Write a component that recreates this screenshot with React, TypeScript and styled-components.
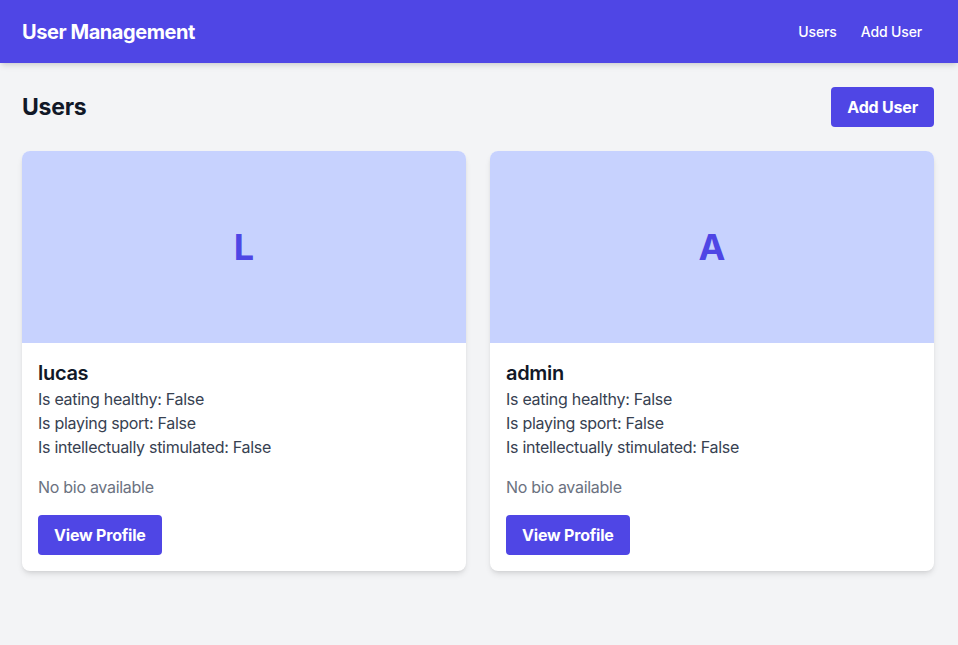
import React from "react";
import styled, { createGlobalStyle } from "styled-components";

const Global = createGlobalStyle`
  html, body { margin: 0; padding: 0; }
  body {
    background: #f3f4f6;
    font-family: Inter, "Noto Sans", "Liberation Sans", sans-serif;
    -webkit-font-smoothing: antialiased;
  }
  * { box-sizing: border-box; }
`;

const Page = styled.div`
  min-height: 645px;
  background: #f3f4f6;
`;

const Nav = styled.nav`
  height: 63px;
  background: #4f46e5;
  box-shadow: 0 4px 6px -1px rgba(0,0,0,0.1), 0 2px 4px -2px rgba(0,0,0,0.1);
  display: flex;
  align-items: center;
  justify-content: space-between;
  padding: 0 24px 0 22px;
`;

const Brand = styled.div`
  color: #fff;
  font-size: 20px;
  font-weight: 700;
  line-height: 28px;
  letter-spacing: -0.022em;
`;

const NavLinks = styled.div`
  display: flex;
`;

const NavLink = styled.a`
  color: #fff;
  font-size: 14px;
  font-weight: 500;
  line-height: 20px;
  padding: 8px 12px;
  text-decoration: none;
  letter-spacing: -0.01em;
`;

const Main = styled.main`
  padding: 24px 24px 0 22px;
`;

const HeaderRow = styled.div`
  display: flex;
  align-items: center;
  justify-content: space-between;
  margin-bottom: 24px;
`;

const Title = styled.h1`
  margin: 0;
  font-size: 23px;
  font-weight: 700;
  color: #111827;
  line-height: 32px;
  letter-spacing: -0.01em;
`;

const Button = styled.button`
  background: #4f46e5;
  color: #fff;
  border: none;
  border-radius: 4px;
  font-family: inherit;
  font-size: 16px;
  font-weight: 700;
  line-height: 24px;
  padding: 8px 16px;
  height: 40px;
  letter-spacing: -0.012em;
  cursor: pointer;
`;

const Grid = styled.div`
  display: grid;
  grid-template-columns: 1fr 1fr;
  gap: 24px;
`;

const Card = styled.div`
  background: #fff;
  border-radius: 8px;
  overflow: hidden;
  box-shadow: 0 4px 6px -1px rgba(0,0,0,0.1), 0 2px 4px -2px rgba(0,0,0,0.1);
`;

const Avatar = styled.div`
  height: 192px;
  background: #c7d2fe;
  display: flex;
  align-items: center;
  justify-content: center;
  color: #4f46e5;
  font-size: 36px;
  font-weight: 700;
`;

const Body = styled.div`
  padding: 16px;
  display: flex;
  flex-direction: column;
  align-items: flex-start;
`;

const Name = styled.h2`
  margin: 0;
  font-size: 20px;
  font-weight: 600;
  line-height: 28px;
  color: #111827;
  letter-spacing: -0.015em;
`;

const Attr = styled.p`
  margin: 0;
  font-size: 16px;
  line-height: 24px;
  color: #374151;
  letter-spacing: -0.018em;
`;

const Bio = styled.p`
  margin: 16px 0 16px;
  font-size: 16px;
  line-height: 24px;
  color: #6b7280;
  letter-spacing: -0.018em;
`;

const users = [{ name: "lucas" }, { name: "admin" }];

export default function App() {
  return (
    <Page>
      <Global />
      <Nav>
        <Brand>User Management</Brand>
        <NavLinks>
          <NavLink href="#">Users</NavLink>
          <NavLink href="#">Add User</NavLink>
        </NavLinks>
      </Nav>
      <Main>
        <HeaderRow>
          <Title>Users</Title>
          <Button>Add User</Button>
        </HeaderRow>
        <Grid>
          {users.map((u) => (
            <Card key={u.name}>
              <Avatar>{u.name.charAt(0).toUpperCase()}</Avatar>
              <Body>
                <Name>{u.name}</Name>
                <Attr>Is eating healthy: False</Attr>
                <Attr>Is playing sport: False</Attr>
                <Attr>Is intellectually stimulated: False</Attr>
                <Bio>No bio available</Bio>
                <Button>View Profile</Button>
              </Body>
            </Card>
          ))}
        </Grid>
      </Main>
    </Page>
  );
}
